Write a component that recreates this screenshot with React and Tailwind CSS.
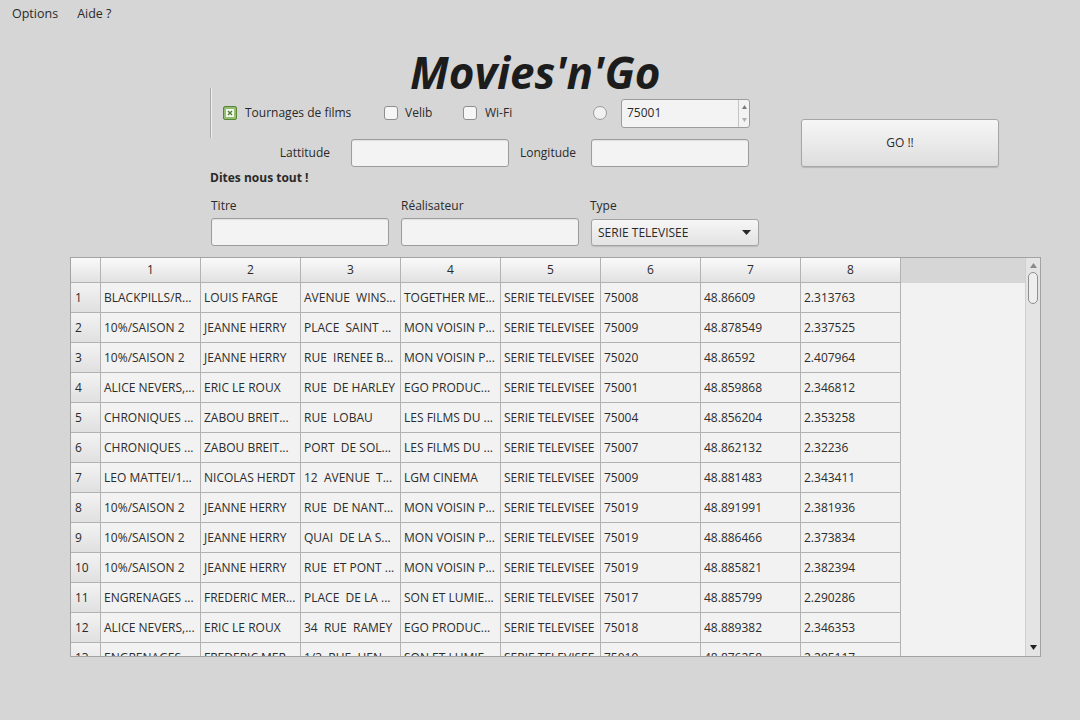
import React from 'react';

const rows = [
  ['BLACKPILLS/R...', 'LOUIS FARGE', 'AVENUE  WINS...', 'TOGETHER ME...', 'SERIE TELEVISEE', '75008', '48.86609', '2.313763'],
  ['10%/SAISON 2', 'JEANNE HERRY', 'PLACE  SAINT ...', 'MON VOISIN P...', 'SERIE TELEVISEE', '75009', '48.878549', '2.337525'],
  ['10%/SAISON 2', 'JEANNE HERRY', 'RUE  IRENEE B...', 'MON VOISIN P...', 'SERIE TELEVISEE', '75020', '48.86592', '2.407964'],
  ['ALICE NEVERS,...', 'ERIC LE ROUX', 'RUE  DE HARLEY', 'EGO PRODUC...', 'SERIE TELEVISEE', '75001', '48.859868', '2.346812'],
  ['CHRONIQUES ...', 'ZABOU BREIT...', 'RUE  LOBAU', 'LES FILMS DU ...', 'SERIE TELEVISEE', '75004', '48.856204', '2.353258'],
  ['CHRONIQUES ...', 'ZABOU BREIT...', 'PORT  DE SOL...', 'LES FILMS DU ...', 'SERIE TELEVISEE', '75007', '48.862132', '2.32236'],
  ['LEO MATTEI/1...', 'NICOLAS HERDT', '12  AVENUE  T...', 'LGM CINEMA', 'SERIE TELEVISEE', '75009', '48.881483', '2.343411'],
  ['10%/SAISON 2', 'JEANNE HERRY', 'RUE  DE NANT...', 'MON VOISIN P...', 'SERIE TELEVISEE', '75019', '48.891991', '2.381936'],
  ['10%/SAISON 2', 'JEANNE HERRY', 'QUAI  DE LA S...', 'MON VOISIN P...', 'SERIE TELEVISEE', '75019', '48.886466', '2.373834'],
  ['10%/SAISON 2', 'JEANNE HERRY', 'RUE  ET PONT ...', 'MON VOISIN P...', 'SERIE TELEVISEE', '75019', '48.885821', '2.382394'],
  ['ENGRENAGES ...', 'FREDERIC MER...', 'PLACE  DE LA ...', 'SON ET LUMIE...', 'SERIE TELEVISEE', '75017', '48.885799', '2.290286'],
  ['ALICE NEVERS,...', 'ERIC LE ROUX', '34  RUE  RAMEY', 'EGO PRODUC...', 'SERIE TELEVISEE', '75018', '48.889382', '2.346353'],
  ['ENGRENAGES ...', 'FREDERIC MER...', '1/3  RUE  HEN...', 'SON ET LUMIE...', 'SERIE TELEVISEE', '75019', '48.876258', '2.295117'],
];

const TextInput = ({ className = '' }) => (
  <div className={`h-[28px] rounded-[3px] border border-[#9c9c9c] bg-[#f3f3f3] shadow-[inset_0_1px_1px_rgba(0,0,0,0.08)] ${className}`} />
);

const CheckBox = () => (
  <div className="w-[14px] h-[14px] rounded-[3px] border border-[#8e8e8e] bg-[#f6f6f6]" />
);

const CheckedBox = () => (
  <div className="w-[14px] h-[14px] rounded-[2px] border border-[#5a8438] bg-[#93bd72] flex items-center justify-center">
    <div className="w-[8px] h-[8px] bg-[#f4f8ef] flex items-center justify-center">
      <svg width="6" height="6" viewBox="0 0 6 6">
        <path d="M1 1 L5 5 M5 1 L1 5" stroke="#4f7d2e" strokeWidth="1.4" />
      </svg>
    </div>
  </div>
);

export default function App() {
  return (
    <div className="w-[1080px] h-[720px] bg-[#d6d6d6] text-[12px] text-[#2a2a2a] font-['Open_Sans',sans-serif] overflow-hidden">
      {/* menu bar */}
      <div className="flex items-center h-[28px] pl-[12px] gap-[19px] text-[12.5px]">
        <span>Options</span>
        <span>Aide ?</span>
      </div>

      {/* title */}
      <div className="h-[60px] pl-[410px] pt-[22px]">
        <div className="text-[44px] leading-[44px] font-bold italic text-[#1c1c1c] whitespace-nowrap">Movies'n'Go</div>
      </div>

      {/* form */}
      <div className="flex pl-[210px]">
        <div className="w-[540px]">
          <div className="h-[50px] flex items-center border-l border-[#a9a9a9] shadow-[inset_1px_0_0_#efefef] pl-[12px]">
            <div className="w-[161px] flex items-center gap-[8px]">
              <CheckedBox />
              <span>Tournages de films</span>
            </div>
            <div className="w-[79px] flex items-center gap-[7px]">
              <CheckBox />
              <span>Velib</span>
            </div>
            <div className="w-[130px] flex items-center gap-[8px]">
              <CheckBox />
              <span>Wi-Fi</span>
            </div>
            <div className="w-[14px] h-[14px] rounded-full border border-[#9a9a9a] bg-[#f1f1f1]" />
            <div className="ml-[14px] w-[129px] h-[29px] rounded-[3px] border border-[#9c9c9c] bg-[#f3f3f3] flex">
              <div className="flex-1 flex items-center pl-[5px]">75001</div>
              <div className="w-[11px] border-l border-[#c4c4c4] flex flex-col items-center justify-between py-[5px]">
                <svg width="5" height="4" viewBox="0 0 5 4"><path d="M2.5 0 L5 4 L0 4 Z" fill="#7a7a7a" /></svg>
                <svg width="5" height="4" viewBox="0 0 5 4"><path d="M0 0 L5 0 L2.5 4 Z" fill="#b0b0b0" /></svg>
              </div>
            </div>
          </div>
          <div className="mt-[1px] h-[28px] flex items-center">
            <div className="w-[120px] text-right">Lattitude</div>
            <TextInput className="ml-[21px] w-[158px]" />
            <div className="w-[82px] pl-[11px]">Longitude</div>
            <TextInput className="w-[158px]" />
          </div>
          <div className="mt-[2px] h-[17px] leading-[17px] font-bold">Dites nous tout !</div>
          <div className="mt-[11px] flex gap-[12px] pl-[1px]">
            <div className="w-[178px]">
              <div className="h-[17px] leading-[17px]">Titre</div>
              <TextInput className="mt-[4px] w-[178px]" />
            </div>
            <div className="w-[178px]">
              <div className="h-[17px] leading-[17px]">Réalisateur</div>
              <TextInput className="mt-[4px] w-[178px]" />
            </div>
            <div className="w-[168px]">
              <div className="h-[17px] leading-[17px] -ml-[1px]">Type</div>
              <div className="mt-[5px] w-[168px] h-[27px] rounded-[3px] border border-[#a3a3a3] bg-linear-to-b from-[#f6f6f6] to-[#e3e3e3] shadow-[0_1px_1px_rgba(0,0,0,0.12)] flex items-center justify-between pl-[6px] pr-[7px]">
                <span>SERIE TELEVISEE</span>
                <svg width="9" height="5" viewBox="0 0 9 5"><path d="M0 0 L9 0 L4.5 5 Z" fill="#2a2a2a" /></svg>
              </div>
            </div>
          </div>
        </div>
        <button className="ml-[51px] mt-[31px] w-[198px] h-[48px] rounded-[3px] border border-[#a6a6a6] bg-linear-to-b from-[#f6f6f6] to-[#dedede] shadow-[0_1px_1px_rgba(0,0,0,0.15)] text-[12px] text-[#2a2a2a]">
          GO !!
        </button>
      </div>

      {/* table */}
      <div className="ml-[70px] mt-[11px] w-[971px] h-[400px] border border-[#a3a3a3] flex overflow-hidden">
        <div className="flex-1 overflow-hidden">
          <div className="flex h-[25px] bg-[#d6d6d6]">
            <div className="w-[30px] shrink-0 border-r border-b border-[#b2b2b2] bg-linear-to-b from-[#fafafa] to-[#e1e1e1]" />
            {[1, 2, 3, 4, 5, 6, 7, 8].map((n) => (
              <div key={n} className="w-[100px] shrink-0 border-r border-b border-[#b2b2b2] bg-linear-to-b from-[#fafafa] to-[#e1e1e1] flex items-center justify-center">
                {n}
              </div>
            ))}
          </div>
          <div className="bg-[#f2f2f2] h-full">
            {rows.map((r, i) => (
              <div key={i} className="flex h-[30px]">
                <div className="w-[30px] shrink-0 border-r border-b border-[#b2b2b2] bg-linear-to-b from-[#f3f3f3] to-[#e0e0e0] flex items-center pl-[4px]">
                  {i + 1}
                </div>
                {r.map((c, j) => (
                  <div key={j} className="w-[100px] shrink-0 border-r border-b border-[#b2b2b2] flex items-center pl-[3px] whitespace-pre overflow-hidden text-[#2c2c2c]">
                    {c}
                  </div>
                ))}
              </div>
            ))}
          </div>
        </div>
        <div className="w-[15px] shrink-0 bg-[#e4e4e4] border-l border-[#d0d0d0] flex flex-col items-center">
          <svg className="mt-[5px]" width="7" height="5" viewBox="0 0 7 5"><path d="M3.5 0 L7 5 L0 5 Z" fill="#8a8a8a" /></svg>
          <div className="mt-[4px] w-[10px] h-[32px] rounded-full border border-[#8f8f8f] bg-[#eeeeee]" />
          <div className="flex-1" />
          <svg className="mb-[6px]" width="7" height="5" viewBox="0 0 7 5"><path d="M0 0 L7 0 L3.5 5 Z" fill="#222222" /></svg>
        </div>
      </div>
    </div>
  );
}
